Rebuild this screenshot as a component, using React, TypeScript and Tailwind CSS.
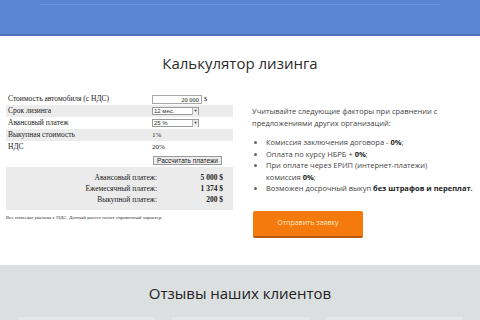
const serif = "font-['Liberation_Serif','Times_New_Roman',serif]";

const inputRows = [
  { label: 'Стоимость автомобиля (с НДС)', kind: 'input', value: '20 000', shade: false },
  { label: 'Срок лизинга', kind: 'select', value: '12 мес.', shade: true },
  { label: 'Авансовый платеж', kind: 'select', value: '25 %', shade: false },
  { label: 'Выкупная стоимость', kind: 'text', value: '1%', shade: true },
  { label: 'НДС', kind: 'text', value: '20%', shade: false },
];

const results = [
  { label: 'Авансовый платеж:', value: '5 000 $' },
  { label: 'Ежемесячный платеж:', value: '1 374 $' },
  { label: 'Выкупной платеж:', value: '200 $' },
];

function SelectBox({ value }: { value: string }) {
  return (
    <div className="flex h-[8px] w-[47px] items-center border border-[#9a9a9a] bg-white pl-[1px] text-[6px] leading-none font-['Liberation_Sans',Arial,sans-serif] text-[#333]">
      <span className="flex-1">{value}</span>
      <span className="flex h-[7px] w-[6px] items-center justify-center border-l border-[#b5b5b5] bg-[#eee] text-[4px] text-[#333]">▼</span>
    </div>
  );
}

export default function App() {
  return (
    <div className="h-[320px] w-[480px] overflow-hidden bg-white font-['Open_Sans',sans-serif]">
      {/* Header */}
      <div className="h-[36px] border-b-2 border-[#4f76bd] bg-[#5a86d3] pt-[4px]">
        <div className="mx-[40px] h-px bg-[#6d95db]" />
      </div>

      <h1 className="mt-[15px] text-center text-[15px] leading-[24px] text-[#2b2b2b]">Калькулятор лизинга</h1>

      <div className="mt-[15px] flex">
        {/* Calculator */}
        <div className={`ml-[6px] w-[227px] pt-[3px] ${serif}`}>
          {inputRows.map((r) => (
            <div key={r.label} className={`flex h-[12px] items-center text-[7.5px] text-[#222] ${r.shade ? 'bg-[#ececec]' : ''}`}>
              <span className="w-[146px] pl-[2px]">{r.label}</span>
              {r.kind === 'input' && (
                <div className="flex items-center">
                  <div className="h-[9px] w-[50px] border border-[#a8a8a8] bg-white pr-[2px] text-right text-[6.5px] leading-[8px]">{r.value}</div>
                  <span className="ml-[2px] text-[6.5px]">$</span>
                </div>
              )}
              {r.kind === 'select' && <SelectBox value={r.value} />}
              {r.kind === 'text' && <span className="text-[7px]">{r.value}</span>}
            </div>
          ))}
          <div className="flex h-[14px] items-center justify-end pr-[11px]">
            <div className="border border-[#9a9a9a] bg-[#ececec] px-[3px] text-[6.5px] leading-[7px] font-['Liberation_Sans',Arial,sans-serif] text-[#222]">Рассчитать платежи</div>
          </div>

          <div className="bg-[#ebebeb] py-[5px]">
            {results.map((r) => (
              <div key={r.label} className="flex h-[11px] items-center text-[7.5px] text-[#222]">
                <span className="w-[151px] text-right">{r.label}</span>
                <span className="w-[66px] text-right font-bold">{r.value}</span>
              </div>
            ))}
          </div>
          <p className="mt-[4px] text-[5px] text-[#333]">Все платежи указаны с НДС. Данный расчет носит справочный характер.</p>
        </div>

        {/* Info */}
        <div className="ml-[19px] mt-[16px] w-[228px] whitespace-nowrap text-[7.5px] leading-[11.5px] text-[#444]">
          <p>Учитывайте следующие факторы при сравнении с<br />предложениями других организаций:</p>
          <ul className="mt-[8px] list-disc pl-[14px] marker:text-[#666]">
            <li>Комиссия заключения договора - <b className="text-[#222]">0%</b>;</li>
            <li>Оплата по курсу НБРБ + <b className="text-[#222]">0%</b>;</li>
            <li>При оплате через ЕРИП (интернет-платежи)<br />комиссия <b className="text-[#222]">0%</b>;</li>
            <li>Возможен досрочный выкуп <b className="text-[#222]">без штрафов и переплат.</b></li>
          </ul>
          <button className="mt-[16px] ml-[1px] flex h-[27px] w-[110px] items-center justify-center rounded-[2px] border-b-2 border-[#b85a0c] bg-[#f57a0d] text-[7px] text-[#fde6c4]">Отправить заявку</button>
        </div>
      </div>

      {/* Reviews */}
      <div className="mt-[27px] bg-[#dcdfe0] pt-[17px]">
        <h2 className="text-center text-[15px] leading-[22px] text-[#222]">Отзывы наших клиентов</h2>
        <div className="mt-[13px] flex gap-[17px] pl-[18px]">
          <div className="h-[20px] w-[137px] bg-[#e4e7e8]" />
          <div className="h-[20px] w-[137px] bg-[#e4e7e8]" />
          <div className="h-[20px] w-[137px] bg-[#e4e7e8]" />
        </div>
      </div>
    </div>
  );
}
